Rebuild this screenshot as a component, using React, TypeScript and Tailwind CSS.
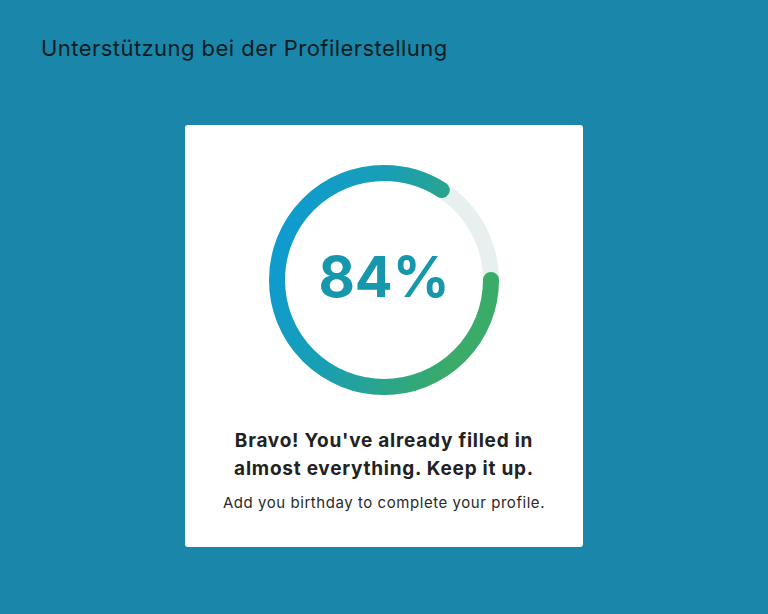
import React from 'react';

const RADIUS = 107;
const STROKE = 16;
const SIZE = 230;

const ProgressRing: React.FC<{ percent: number }> = ({ percent }) => {
  const circumference = 2 * Math.PI * RADIUS;
  const filled = (percent / 100) * circumference;
  return (
    <div className="relative w-[230px] h-[230px]">
      <svg width={SIZE} height={SIZE} viewBox={`0 0 ${SIZE} ${SIZE}`}>
        <defs>
          <linearGradient id="ringGradient" x1="0" y1="0" x2="1" y2="0.35">
            <stop offset="0%" stopColor="#0b9ad8" />
            <stop offset="50%" stopColor="#1a9fb0" />
            <stop offset="100%" stopColor="#3aab68" />
          </linearGradient>
        </defs>
        <circle cx={SIZE / 2} cy={SIZE / 2} r={RADIUS} fill="none" stroke="#e7efef" strokeWidth={STROKE} />
        {/* starts at 3 o'clock and runs clockwise */}
        <circle
          cx={SIZE / 2}
          cy={SIZE / 2}
          r={RADIUS}
          fill="none"
          stroke="url(#ringGradient)"
          strokeWidth={STROKE}
          strokeLinecap="round"
          strokeDasharray={`${filled} ${circumference}`}
        />
      </svg>
      <div className="absolute inset-0 flex items-center justify-center pb-[6px]">
        <span className="text-[56px] font-bold text-[#1797ae] font-['Inter',sans-serif] leading-none">
          {percent}%
        </span>
      </div>
    </div>
  );
};

export default function App() {
  return (
    <div className="w-[768px] h-[614px] bg-[#1a86a9] font-['Inter',sans-serif] overflow-hidden">
      <h1 className="pt-[34px] pl-[41px] text-[22px] tracking-[0.45px] text-[#0d1c22] leading-[28px]">
        Unterstützung bei der Profilerstellung
      </h1>
      <div className="flex justify-center pt-[63px]">
        <div className="w-[398px] h-[422px] bg-white rounded-[3px] flex flex-col items-center pt-[40px]">
          <ProgressRing percent={84} />
          <p className="mt-[32px] text-[19px] font-bold tracking-[0.75px] text-[#222222] text-center leading-[28px]">
            Bravo! You've already filled in
            <br />
            almost everything. Keep it up.
          </p>
          <p className="mt-[9px] text-[15px] tracking-[0.55px] text-[#2a2a2a]">
            Add you birthday to complete your profile.
          </p>
        </div>
      </div>
    </div>
  );
}
